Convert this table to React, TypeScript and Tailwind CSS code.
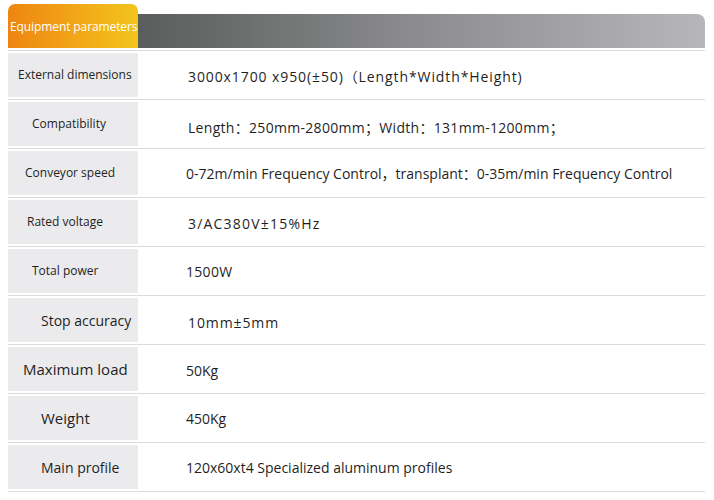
const rows = [
  { label: "External dimensions", lp: "pl-[10px]", ls: "text-[12px]", value: "3000x1700 x950(±50)（Length*Width*Height)", vs: "text-[14px] tracking-[0.9px] pt-[2px]", vx: "pl-[50px]" },
  { label: "Compatibility", lp: "pl-[24px]", ls: "text-[12px]", value: "Length：250mm-2800mm；Width：131mm-1200mm；", vs: "text-[14px] tracking-[0.3px] pt-[6px]", vx: "pl-[50px]" },
  { label: "Conveyor speed", lp: "pl-[17px]", ls: "text-[12px]", value: "0-72m/min Frequency Control，transplant：0-35m/min Frequency Control", vs: "text-[14px] tracking-[0px]", vx: "pl-[48px]" },
  { label: "Rated voltage", lp: "pl-[19px]", ls: "text-[12px]", value: "3/AC380V±15%Hz", vs: "text-[14px] tracking-[1.2px] pt-[2px]", vx: "pl-[50px]" },
  { label: "Total power", lp: "pl-[24px]", ls: "text-[12px]", value: "1500W", vs: "text-[14px] tracking-[0.3px] pt-0", vx: "pl-[48px]" },
  { label: "Stop accuracy", lp: "pl-[33px]", ls: "text-[14px]", value: "10mm±5mm", vs: "text-[14px] tracking-[0.9px] pt-[4px]", vx: "pl-[50px]" },
  { label: "Maximum load", lp: "pl-[15px]", ls: "text-[15px]", value: "50Kg", vs: "text-[14px] pt-[2px]", vx: "pl-[48px]" },
  { label: "Weight", lp: "pl-[33px]", ls: "text-[15px]", value: "450Kg", vs: "text-[14px]", vx: "pl-[48px]" },
  { label: "Main profile", lp: "pl-[33px]", ls: "text-[14px]", value: "120x60xt4 Specialized aluminum profiles", vs: "text-[14px]", vx: "pl-[48px]" },
];

export default function App() {
  return (
    <div className="w-[714px] h-[500px] bg-white text-[#1f1f1f] font-['Open_Sans','Noto_Sans_CJK_SC',sans-serif] pl-[8px] pr-[9px] pt-[4px] overflow-hidden">
      <div className="flex items-end h-[44px]">
        <div className="w-[130px] h-[44px] rounded-t-[7px] bg-gradient-to-r from-[#ee8512] to-[#f2c41c] flex items-center pl-[2px] pt-[1px]">
          <span className="text-white text-[12px] tracking-[-0.1px] whitespace-nowrap">Equipment parameters</span>
        </div>
        <div className="flex-1 h-[34px] rounded-tr-[8px] bg-gradient-to-r from-[#5a5d5c] via-[#8d8d8f] to-[#b7b7bb]" />
      </div>
      <div className="mt-[2px] border-b border-[#dcdcdc]" />
      {rows.map((r) => (
        <div key={r.label} className="flex items-center pt-[2px] pb-[2px] border-b border-[#dcdcdc] h-[49px]">
          <div className={`w-[130px] h-[44px] bg-[#ebebed] flex items-center ${r.lp}`}>
            <span className={`${r.ls} whitespace-nowrap`}>{r.label}</span>
          </div>
          <div className={`${r.vx} ${r.vs} whitespace-nowrap`}>{r.value}</div>
        </div>
      ))}
    </div>
  );
}
